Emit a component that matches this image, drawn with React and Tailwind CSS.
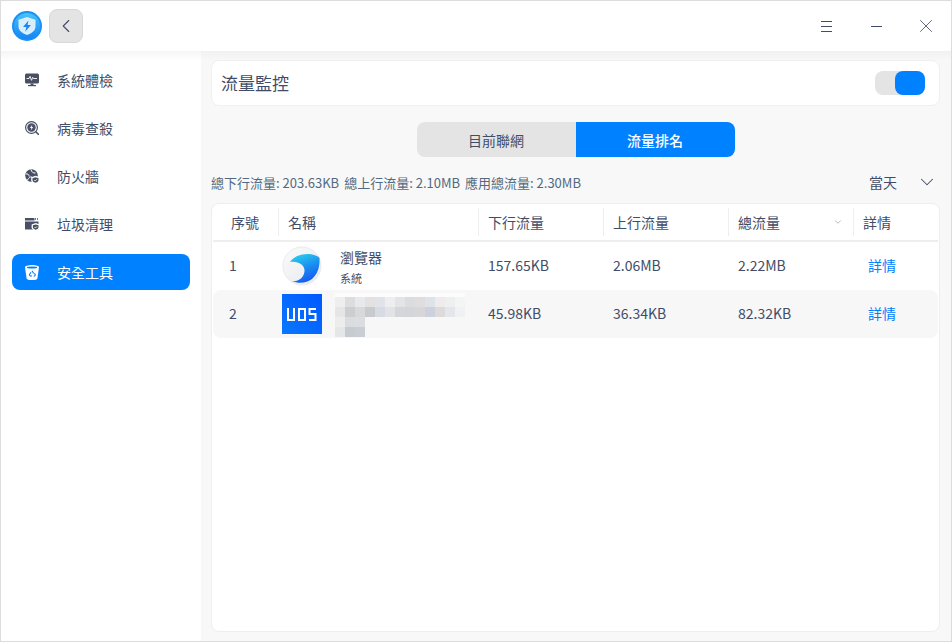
import React from 'react';
import { ChevronLeft, ChevronDown, X } from 'lucide-react';

const font = "font-['Noto_Sans_CJK_TC','Noto_Sans',sans-serif]";

const MonitorIcon = () => (
  <svg width="14" height="14" viewBox="0 0 14 14" fill="none">
    <rect x="0" y="0.500" width="14" height="10" rx="1.500" fill="#4a5064" />
    <path d="M1.500 5.500h2.500l1-2.200 1.500 4 1.200-3 .8 1.200h3.500" stroke="#fff" strokeWidth="0.900" />
    <rect x="5.500" y="10.500" width="3" height="1.500" fill="#4a5064" />
    <rect x="3" y="12" width="8" height="1.200" fill="#4a5064" />
  </svg>
);

const ScanIcon = ({ color = '#4a5064' }) => (
  <svg width="14" height="14" viewBox="0 0 14 14" fill="none">
    <circle cx="6.500" cy="6.500" r="5.900" stroke={color} strokeWidth="1.200" />
    <circle cx="6.500" cy="6.500" r="4.200" fill={color} />
    <path d="M7.400 3.600 4.900 7.100h1.500l-.7 2.500 2.500-3.600H6.700z" fill="#fff" />
    <path d="m10.800 10.800 2.500 2.500" stroke={color} strokeWidth="1.600" strokeLinecap="round" />
  </svg>
);

const GlobeIcon = () => (
  <svg width="15" height="15" viewBox="0 0 15 15" fill="none">
    <circle cx="6.500" cy="6.500" r="6.300" fill="#4a5064" />
    <path d="M.8 5c2-.5 3 .5 3.500 2.500M6 .5C6.500 3 8 4.200 10.500 4M2.500 11c1-2 2.500-3.500 4.500-3" stroke="#fff" strokeWidth="1" />
    <path d="M10.500 6.800 14.800 8.300v2.900c0 1.600-1.800 3-4.300 3.800-2.500-.8-4.300-2.200-4.300-3.800V8.300z" fill="#fff" />
    <path d="M10.500 8.200 13.500 9.200v2c0 1-1.200 2-3 2.500-1.800-.5-3-1.500-3-2.500v-2z" fill="#4a5064" />
    <path d="m9.200 11 1 1 1.700-1.800" stroke="#fff" strokeWidth="0.800" />
  </svg>
);

const CleanIcon = () => (
  <svg width="15" height="14" viewBox="0 0 15 14" fill="none">
    <path d="M0 1h9.500v2.500H0z" fill="#4a5064" />
    <path d="M10 2h3.500" stroke="#4a5064" strokeWidth="1.500" strokeDasharray="1 1" />
    <path d="M0 4.500h13.500v8H0z" fill="#4a5064" />
    <path d="M10.700 6 14.800 7.400v2.800c0 1.600-1.700 3-4.100 3.800-2.400-.8-4.100-2.200-4.100-3.800V7.400z" fill="#fff" />
    <path d="M10.700 7.400 13.500 8.300v1.900c0 1-1.100 2-2.800 2.500-1.700-.5-2.800-1.500-2.800-2.500V8.300z" fill="#4a5064" />
    <path d="m9.500 10 1 1 1.500-1.600" stroke="#fff" strokeWidth="0.800" />
  </svg>
);

const TrashIcon = () => (
  <svg width="14" height="15" viewBox="0 0 14 15" fill="none">
    <path d="M0 2.200C0 1 3 0 7 0s7 1 7 2.200l-1.600 11.200C12.200 14.400 10 15 7 15s-5.200-.6-5.400-1.600z" fill="#fff" />
    <ellipse cx="7" cy="2.500" rx="5.200" ry="1.100" fill="#0081ff" />
    <path d="M7 5.800 8.600 8.400M5.900 7.200l-1.500 2.600.8 1.200H7M8.700 11h1l.6-1.200-.9-1.500" stroke="#0081ff" strokeWidth="1.100" />
  </svg>
);

const navItems = [
  { label: '系統體檢', icon: <MonitorIcon /> },
  { label: '病毒查殺', icon: <ScanIcon /> },
  { label: '防火牆', icon: <GlobeIcon /> },
  { label: '垃圾清理', icon: <CleanIcon /> },
  { label: '安全工具', icon: <TrashIcon />, active: true },
];

const AppLogo = () => (
  <svg width="30" height="30" viewBox="0 0 30 30" fill="none">
    <defs>
      <linearGradient id="ring" x1="0.500" y1="0" x2="0.500" y2="1">
        <stop offset="0" stopColor="#45c4fa" />
        <stop offset="1" stopColor="#1484f5" />
      </linearGradient>
    </defs>
    <circle cx="15" cy="15" r="15" fill="#1a8ff6" />
    <circle cx="15" cy="15" r="13" fill="url(#ring)" />
    <path d="M15 6 23.500 8.800v6.700c0 3.900-3.500 6.800-8.500 8.500-5-1.700-8.500-4.600-8.500-8.500V8.800z" fill="#d9eefc" />
    <path d="M16.500 9.500 11 16h3.400l-1.200 4.800 5.700-6.800h-3.400z" fill="#1a84f0" />
  </svg>
);

const BrowserIcon = () => (
  <svg width="40" height="40" viewBox="0 0 40 40" fill="none">
    <defs>
      <linearGradient id="wave" x1="0.200" y1="0" x2="0.600" y2="1">
        <stop offset="0" stopColor="#2bd2ec" />
        <stop offset="0.500" stopColor="#1a8ff0" />
        <stop offset="1" stopColor="#1458f2" />
      </linearGradient>
      <linearGradient id="disc" x1="0" y1="0" x2="1" y2="1">
        <stop offset="0" stopColor="#fbfbfc" />
        <stop offset="1" stopColor="#e6e8ec" />
      </linearGradient>
    </defs>
    <circle cx="20" cy="20" r="19" fill="url(#disc)" stroke="#e8eaee" />
    <path d="M8 16C12 10 20 7.500 27 8c5 .5 9 2 10.500 4 .5 8-1.500 16-7.500 21-5 4-13 5-20 2 6 1 12-3 12.500-10C23 19 16 14.500 8 16z" fill="url(#wave)" />
  </svg>
);

const UosIcon = () => (
  <div className="w-10 h-10 bg-[linear-gradient(45deg,#0a78ff,#0058ff)] flex items-center justify-center">
    <svg width="30" height="13" viewBox="0 0 30 13" fill="none" stroke="#fff" strokeWidth="2">
      <path d="M1 0v12h6V0" />
      <path d="M12 1h6v11h-6z" />
      <path d="M29 1h-6.500v5H28.500v6H22" />
    </svg>
  </div>
);

// mosaic over the hidden app name: [column, row, colour]
const mosaic = [
  [0, 0, '#eeeeee'], [1, 0, '#dcddde'], [2, 0, '#e8e9ea'], [3, 0, '#e4e1e2'],
  [4, 0, '#e0e4ea'], [5, 0, '#eeeeef'], [6, 0, '#e3e4e7'], [7, 0, '#dbdcdf'],
  [8, 0, '#e0dde0'], [9, 0, '#dee3e9'], [10, 0, '#eeebec'], [11, 0, '#eeeff1'],
  [12, 0, '#f3f4f4'],
  [0, 1, '#e6e6e7'], [1, 1, '#cdced1'], [2, 1, '#d8d9db'], [3, 1, '#c9cace'],
  [4, 1, '#d8dbe4'], [5, 1, '#e2e3e6'], [6, 1, '#d4d6da'], [7, 1, '#d3d5da'],
  [8, 1, '#d8d6d8'], [9, 1, '#cdd1dc'], [10, 1, '#dedadc'], [11, 1, '#e5e6ea'],
  [12, 1, '#f0f1f3'],
  [0, 2, '#ededee'], [1, 2, '#dbdcdf'], [2, 2, '#dcdde0'],
  [0, 3, '#e5e6e7'], [1, 3, '#c6cbd2'], [2, 3, '#c9ced5'],
];

const Mosaic = () => (
  <svg width="130" height="44" viewBox="0 0 130 44">
    <rect x="0" y="0" width="130" height="4" fill="#fcfcfc" />
    {mosaic.map(([col, row, c]) => (
      <rect key={`${col}-${row}`} x={col * 10} y={4 + row * 10} width="10" height="10" fill={c} />
    ))}
  </svg>
);

const columns = [
  { label: '序號', className: 'w-[66px] pl-[18px]' },
  { label: '名稱', className: 'w-[200px] pl-[9px]' },
  { label: '下行流量', className: 'w-[125px] pl-[9px]' },
  { label: '上行流量', className: 'w-[125px] pl-[9px]' },
  { label: '總流量', className: 'w-[125px] pl-[9px]', sorted: true },
  { label: '詳情', className: 'flex-1 pl-[9px]' },
];

const Row = ({ index, name, icon, down, up, total, shaded }) => (
  <div className={`flex items-center h-12 rounded-lg text-sm text-[#414d68] ${shaded ? 'bg-[#f7f7f7]' : ''}`}>
    <div className="w-[66px] pl-[16px] pb-[3px]">{index}</div>
    <div className="w-[200px] flex items-center pl-[3px] h-full">
      {icon}
      {name}
    </div>
    <div className="w-[125px] pl-[9px] pb-[3px]">{down}</div>
    <div className="w-[125px] pl-[9px] pb-[3px]">{up}</div>
    <div className="w-[125px] pl-[9px] pb-[3px]">{total}</div>
    <div className="flex-1 pl-[14px] pb-[2px] text-[#0081ff]">詳情</div>
  </div>
);

export default function App() {
  return (
    <div className={`w-[952px] h-[642px] bg-white border border-[#dcdcdc] flex flex-col overflow-hidden ${font}`}>
      {/* title bar */}
      <div className="h-[50px] shrink-0 flex items-center pl-[11px] bg-white">
        <AppLogo />
        <button className="ml-[7px] w-[34px] h-[34px] rounded-lg bg-[#e4e4e4] border border-[#d8d8d8] flex items-center justify-center text-[#414d68]">
          <ChevronLeft size={22} strokeWidth={1.200} />
        </button>
        <div className="ml-auto flex items-center">
          <div className="w-[50px] h-[50px] flex flex-col items-center justify-center gap-1">
            <div className="w-[11px] h-px bg-[#414d68]" />
            <div className="w-[11px] h-px bg-[#414d68]" />
            <div className="w-[11px] h-px bg-[#414d68]" />
          </div>
          <div className="w-[50px] h-[50px] flex items-center justify-center">
            <div className="w-[11px] h-px bg-[#414d68]" />
          </div>
          <div className="w-[50px] h-[50px] flex items-center justify-center text-[#414d68]">
            <X size={22} strokeWidth={0.900} />
          </div>
        </div>
      </div>

      <div className="flex-1 flex min-h-0">
        {/* sidebar */}
        <aside className="w-[200px] shrink-0 bg-[linear-gradient(#f5f5f5,#ffffff_10px)] px-[11px] pt-[11px] flex flex-col gap-[12px]">
          {navItems.map((item) => (
            <div
              key={item.label}
              className={`h-9 rounded-lg flex items-center pl-[13px] text-sm ${item.active ? 'bg-[#0081ff] text-white' : 'text-[#414d68]'}`}
            >
              <span className="w-[15px] flex justify-start">{item.icon}</span>
              <span className="ml-[17px]">{item.label}</span>
            </div>
          ))}
        </aside>

        {/* content */}
        <main className="flex-1 bg-[linear-gradient(#f1f1f1,#f8f8f8_10px)] pl-[10px] pr-[11px] pt-[9px] pb-[9px] flex flex-col min-w-0">
          <div className="h-[46px] shrink-0 bg-white rounded-lg border border-[#f0f0f0] flex items-center justify-between pl-[9px] pr-[14px]">
            <span className="text-[17px] text-[#414d68]">流量監控</span>
            <div className="relative w-[50px] h-6 rounded-lg bg-[#e4e4e4]">
              <div className="absolute right-0 top-0 w-[30px] h-6 rounded-lg bg-[#0081ff]" />
            </div>
          </div>

          <div className="mt-4 h-[35px] shrink-0 flex justify-center">
            <div className="flex text-sm rounded-lg overflow-hidden">
              <div className="w-[159px] bg-[#e4e4e4] text-[#414d68] flex items-center justify-center">目前聯網</div>
              <div className="w-[159px] bg-[#0081ff] text-white font-medium flex items-center justify-center">流量排名</div>
            </div>
          </div>

          <div className="mt-2 h-9 shrink-0 flex items-center justify-between">
            <div className="flex gap-[5px] text-[13px] text-[#526a7f]">
              <span>總下行流量: 203.63KB</span>
              <span>總上行流量: 2.10MB</span>
              <span>應用總流量: 2.30MB</span>
            </div>
            <div className="flex items-center text-sm text-[#414d68] pr-[2px] pb-[2px]">
              <span>當天</span>
              <ChevronDown size={22} strokeWidth={1.100} className="ml-[19px]" />
            </div>
          </div>

          {/* table */}
          <div className="mt-[2px] flex-1 bg-white rounded-lg border border-[#eeeeee] px-px min-h-0">
            <div className="flex items-center h-[38px] border-b-2 border-[#eeeeee] text-sm text-[#414d68]">
              {columns.map((col, i) => (
                <div key={col.label} className={`relative h-7 flex items-center ${col.className} ${i < columns.length - 1 ? 'border-r border-[#eeeeee]' : ''}`}>
                  {col.label}
                  {col.sorted && (
                    <ChevronDown size={10} strokeWidth={1.300} className="absolute right-[10px] top-[9px] text-[#7a8396]" />
                  )}
                </div>
              ))}
            </div>
            <Row
              index="1"
              icon={<BrowserIcon />}
              name={
                <div className="flex flex-col ml-[18px]">
                  <span className="text-sm leading-5">瀏覽器</span>
                  <span className="text-[11px] leading-4 mt-[3px]">系統</span>
                </div>
              }
              down="157.65KB"
              up="2.06MB"
              total="2.22MB"
            />
            <Row
              index="2"
              icon={<UosIcon />}
              name={<div className="ml-[13px] mt-[2px]"><Mosaic /></div>}
              down="45.98KB"
              up="36.34KB"
              total="82.32KB"
              shaded
            />
          </div>
        </main>
      </div>
    </div>
  );
}
